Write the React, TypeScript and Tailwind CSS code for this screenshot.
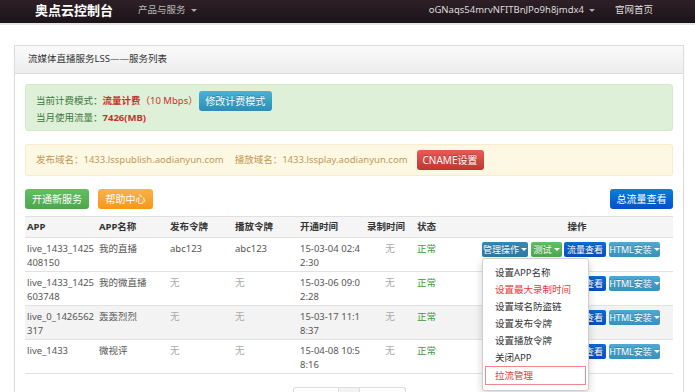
import React from "react";

const font = { fontFamily: '"Noto Sans", "Noto Sans CJK SC", sans-serif' };

function Caret() {
  return (
    <span className="ml-[2px] inline-block h-0 w-0 shrink-0 border-x-[3px] border-t-[3px] border-x-transparent border-t-white align-middle" />
  );
}

function SmallBtn({ cls, children, caret }: { cls: string; children: React.ReactNode; caret?: boolean }) {
  return (
    <span
      className={`inline-flex h-[15px] shrink-0 items-center justify-center whitespace-nowrap rounded-[2px] px-0 text-[9px] leading-none text-white [text-shadow:0_-1px_0_rgba(0,0,0,0.25)] ${cls}`}
    >
      {children}
      {caret && <Caret />}
    </span>
  );
}

type Row = {
  app: [string, string?];
  name: string;
  pub: string;
  play: string;
  time: [string, string];
  gray?: boolean;
};

const rows: Row[] = [
  { app: ["live_1433_1425", "408150"], name: "我的直播", pub: "abc123", play: "abc123", time: ["15-03-04 02:4", "2:30"] },
  { app: ["live_1433_1425", "603748"], name: "我的微直播", pub: "无", play: "无", time: ["15-03-06 09:0", "2:28"] },
  { app: ["live_0_1426562", "317"], name: "轰轰烈烈", pub: "无", play: "无", time: ["15-03-17 11:1", "8:37"], gray: true },
  { app: ["live_1433"], name: "微视评", pub: "无", play: "无", time: ["15-04-08 10:5", "8:16"] },
];

export default function App() {
  return (
    <div className="min-h-[392px] w-[695px] bg-white text-[9.5px] text-[#555]" style={font}>
      {/* navbar */}
      <div className="flex h-[25px] items-center border-b-2 border-[#e4e4e4] bg-gradient-to-b from-[#2f2027] to-[#1b1317] pb-[2px]">
        <div className="pl-[35px] text-[13px] font-bold leading-none text-white">奥点云控制台</div>
        <div className="ml-[25px] flex items-center text-[9.5px] text-[#bbb]">
          产品与服务
          <span className="ml-[5px] inline-block h-0 w-0 border-x-[3px] border-t-[3px] border-x-transparent border-t-[#aaa]" />
        </div>
        <div className="flex-1" />
        <div className="flex items-center text-[9.5px] text-[#ddd]">
          oGNaqs54mrvNFITBnJPo9h8jmdx4
          <span className="ml-[5px] inline-block h-0 w-0 border-x-[3px] border-t-[3px] border-x-transparent border-t-[#aaa]" />
        </div>
        <div className="ml-[20px] mr-[42px] text-[9.5px] text-[#ddd]">官网首页</div>
      </div>

      {/* panel */}
      <div className="ml-[14px] mr-[11px] mt-[20px] border border-[#dcdcdc] shadow-[0_1px_2px_rgba(0,0,0,0.05)]">
        <div className="flex h-[28px] items-center border-b border-[#dedede] bg-gradient-to-b from-[#fafafa] to-[#ededed] pl-[13px] text-[9.5px] text-[#333]">
          流媒体直播服务LSS——服务列表
        </div>
        <div className="px-[10px] pt-[10px]">
          {/* success alert */}
          <div className="flex flex-col rounded-[3px] border border-[#d6e9c6] bg-[#dff0d8] pb-[5px] pl-[10px] pt-[6px] text-[#3c763d]">
            <div className="flex h-[20px] items-center">
              <span>当前计费模式：</span>
              <span className="font-bold text-[#c9302c]">流量计费</span>
              <span className="text-[#c9302c]">（10 Mbps）</span>
              <span className="ml-[1px] inline-flex h-[20px] w-[73px] items-center justify-center rounded-[3px] bg-gradient-to-b from-[#48b2da] to-[#2a8fb8] text-[10px] text-white [text-shadow:0_-1px_0_rgba(0,0,0,0.25)]">
                修改计费模式
              </span>
            </div>
            <div className="h-[14px] leading-[14px]">
              当月使用流量：<span className="font-bold text-[#c9302c]">7426(MB)</span>
            </div>
          </div>

          {/* warning alert */}
          <div className="mt-[13px] flex h-[32px] items-center rounded-[3px] border border-[#faebcc] bg-[#fcf8e3] pl-[10px] text-[#c09853]">
            <span>发布域名：1433.lsspublish.aodianyun.com</span>
            <span className="ml-[11px]">播放域名：1433.lssplay.aodianyun.com</span>
            <span className="ml-[9px] inline-flex h-[20px] w-[67px] items-center justify-center rounded-[3px] bg-gradient-to-b from-[#ea5a55] to-[#c1352f] text-[10px] text-white [text-shadow:0_-1px_0_rgba(0,0,0,0.25)]">
              CNAME设置
            </span>
          </div>

          {/* buttons */}
          <div className="mt-[13px] flex items-center">
            <span className="inline-flex h-[20px] w-[64px] items-center justify-center rounded-[3px] bg-gradient-to-b from-[#5fc25f] to-[#4ea54e] text-[10px] text-white">
              开通新服务
            </span>
            <span className="ml-[9px] inline-flex h-[20px] w-[55px] items-center justify-center rounded-[3px] bg-gradient-to-b from-[#fbb14a] to-[#f7960e] text-[10px] text-white">
              帮助中心
            </span>
            <div className="flex-1" />
            <span className="inline-flex h-[20px] w-[63px] items-center justify-center rounded-[3px] bg-gradient-to-b from-[#0a7fd6] to-[#0850c6] text-[10px] text-white">
              总流量查看
            </span>
          </div>

          {/* table */}
          <div className="relative mt-[7px]">
            <table className="w-[648px] table-fixed border-collapse">
              <colgroup>
                <col className="w-[72px]" />
                <col className="w-[71px]" />
                <col className="w-[65px]" />
                <col className="w-[65px]" />
                <col className="w-[67px]" />
                <col className="w-[50px]" />
                <col className="w-[66px]" />
                <col className="w-[192px]" />
              </colgroup>
              <thead>
                <tr className="h-[21px] border-y border-[#e0e0e0] bg-[#f5f5f5] text-left font-bold text-[#333]">
                  <th className="pl-[2px]">APP</th>
                  <th className="pl-[2px]">APP名称</th>
                  <th className="pl-[2px]">发布令牌</th>
                  <th className="pl-[2px]">播放令牌</th>
                  <th className="pl-[2px]">开通时间</th>
                  <th className="pl-[2px]">录制时间</th>
                  <th className="pl-[2px]">状态</th>
                  <th className="text-center">操作</th>
                </tr>
              </thead>
              <tbody>
                {rows.map((r, i) => (
                  <tr key={i} className={`h-[34px] border-b border-[#e2e2e2] align-top leading-[14px] ${r.gray ? "bg-[#f3f3f3]" : ""}`}>
                    <td className="pl-[2px] pt-[4px]">
                      {r.app[0]}
                      {r.app[1] && <br />}
                      {r.app[1]}
                    </td>
                    <td className="pl-[2px] pt-[4px]">{r.name}</td>
                    <td className={`pl-[2px] pt-[4px] ${r.pub === "无" ? "text-[#aaa]" : ""}`}>{r.pub}</td>
                    <td className={`pl-[2px] pt-[4px] ${r.play === "无" ? "text-[#aaa]" : ""}`}>{r.play}</td>
                    <td className="pl-[2px] pt-[4px]">
                      {r.time[0]}
                      <br />
                      {r.time[1]}
                    </td>
                    <td className="pt-[4px] text-center text-[#aaa]">无</td>
                    <td className="pl-[2px] pt-[4px] text-[#3d9a3d]">正常</td>
                    <td className="pl-[1px] pt-[4px]">
                      <div className="flex items-center">
                        <SmallBtn cls={`w-[46px] bg-gradient-to-b ${i === 0 ? "from-[#3589b5] to-[#2a7aa3]" : "from-[#3f95c0] to-[#2f80aa]"}`} caret>管理操作</SmallBtn>
                        <SmallBtn cls="ml-[3px] w-[31px] bg-gradient-to-b from-[#62c062] to-[#4ca84c]" caret>测试</SmallBtn>
                        <SmallBtn cls="ml-[2px] w-[42px] bg-gradient-to-b from-[#0a6cd6] to-[#0a4eb8]">流量查看</SmallBtn>
                        <SmallBtn cls="ml-[3px] w-[51px] bg-gradient-to-b from-[#4eaad2] to-[#3791bb]" caret>HTML安装</SmallBtn>
                      </div>
                    </td>
                  </tr>
                ))}
              </tbody>
            </table>

            {/* dropdown menu */}
            <div className="absolute left-[457px] top-[42px] w-[107px] rounded-[3px] border border-[#cfcfcf] bg-white py-[5px] text-[9.5px] text-[#333] shadow-[0_3px_8px_rgba(0,0,0,0.18)]">
              <div className="h-[17px] pl-[12px] leading-[17px]">设置APP名称</div>
              <div className="h-[17px] pl-[12px] leading-[17px] text-[#e8383d]">设置最大录制时间</div>
              <div className="h-[17px] pl-[12px] leading-[17px]">设置域名防盗链</div>
              <div className="h-[17px] pl-[12px] leading-[17px]">设置发布令牌</div>
              <div className="h-[17px] pl-[12px] leading-[17px]">设置播放令牌</div>
              <div className="h-[17px] pl-[12px] leading-[17px]">关闭APP</div>
              <div className="mx-[2px] h-[19px] border border-[#f08a8a] pl-[9px] leading-[17px] text-[#e0393e]">拉流管理</div>
            </div>
          </div>

          {/* pagination */}
          <div className="mt-[13px] flex justify-center pb-[10px]">
            <div className="flex h-[22px] rounded-t-[3px] border border-b-0 border-[#ddd]">
              <div className="w-[44px]" />
              <div className="w-[22px] border-x border-[#ddd] bg-[#f3f3f3]" />
              <div className="w-[45px]" />
            </div>
          </div>
        </div>
      </div>
    </div>
  );
}
